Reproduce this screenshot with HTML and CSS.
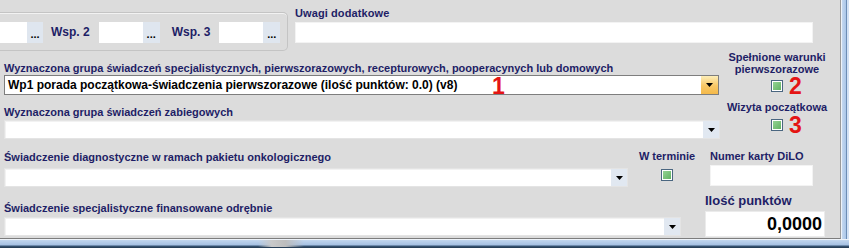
FILE: index.html
```html
<!DOCTYPE html>
<html lang="pl">
<head>
  <meta charset="UTF-8">
  <title>Świadczenia</title>
  <link rel="stylesheet" href="styles.css">
</head>
<body>
  <div class="window">
    <div class="window-body">
      <div class="panel">

        <div class="top-row">
          <div class="coords">
            <div class="pick pick-cut"><span class="pick-field"></span><span class="pick-btn">...</span></div>
            <span class="lbl coord-lbl">Wsp. 2</span>
            <div class="pick"><span class="pick-field"></span><span class="pick-btn">...</span></div>
            <span class="lbl coord-lbl coord-lbl-wide">Wsp. 3</span>
            <div class="pick"><span class="pick-field"></span><span class="pick-btn">...</span></div>
          </div>
          <div class="notes">
            <div class="lbl notes-lbl">Uwagi dodatkowe</div>
            <div class="field notes-field"></div>
          </div>
        </div>

        <div class="mid-row">
          <div class="groups">
            <div class="lbl group-lbl">Wyznaczona grupa świadczeń specjalistycznych, pierwszorazowych, recepturowych, pooperacynych lub domowych</div>
            <div class="combo combo-active">
              <span class="combo-text">Wp1 porada początkowa-świadczenia pierwszorazowe (ilość punktów: 0.0) (v8)</span>
              <span class="combo-btn combo-btn-hot">
                <svg width="7" height="4" viewBox="0 0 7 4"><path d="M0 0h7L3.5 4z" fill="#000"/></svg>
              </span>
              <span class="mark mark-one">1</span>
            </div>
            <div class="lbl group-lbl group-lbl-2">Wyznaczona grupa świadczeń zabiegowych</div>
            <div class="combo combo-wide">
              <span class="combo-text"></span>
              <span class="combo-btn">
                <svg width="7" height="4" viewBox="0 0 7 4"><path d="M0 0h7L3.5 4z" fill="#000"/></svg>
              </span>
            </div>
          </div>
          <div class="flags">
            <div class="lbl flag-lbl">Spełnione warunki<br>pierwszorazowe</div>
            <div class="check-wrap"><span class="check"></span><span class="mark mark-side">2</span></div>
            <div class="lbl flag-lbl flag-lbl-2">Wizyta początkowa</div>
            <div class="check-wrap"><span class="check"></span><span class="mark mark-side">3</span></div>
          </div>
        </div>

        <div class="bottom-row">
          <div class="lower-left">
            <div class="lower-line">
              <div class="onko">
                <div class="lbl big-lbl">Świadczenie diagnostyczne w ramach pakietu onkologicznego</div>
                <div class="combo combo-onko">
                  <span class="combo-text"></span>
                  <span class="combo-btn">
                    <svg width="7" height="4" viewBox="0 0 7 4"><path d="M0 0h7L3.5 4z" fill="#000"/></svg>
                  </span>
                </div>
              </div>
              <div class="in-time">
                <div class="lbl">W terminie</div>
                <span class="check"></span>
              </div>
            </div>
            <div class="lbl big-lbl big-lbl-2">Świadczenie specjalistyczne finansowane odrębnie</div>
            <div class="combo combo-extra">
              <span class="combo-text"></span>
              <span class="combo-btn">
                <svg width="7" height="4" viewBox="0 0 7 4"><path d="M0 0h7L3.5 4z" fill="#000"/></svg>
              </span>
            </div>
          </div>
          <div class="lower-right">
            <div class="lbl dilo-lbl">Numer karty DiLO</div>
            <div class="field dilo-field"></div>
            <div class="lbl points-lbl">Ilość punktów</div>
            <div class="field points-field">0,0000</div>
          </div>
        </div>

      </div>
      <div class="frame-right"></div>
    </div>
    <div class="frame-bottom"><span class="frame-grip"></span></div>
  </div>
</body>
</html>
```

FILE: styles.css
```css
* {
  box-sizing: border-box;
}
body {
  margin: 0;
  width: 849px;
  height: 248px;
  overflow: hidden;
  background-color: #dcdcdc;
  font-family: "Liberation Sans", Arial, sans-serif;
}
.window {
  display: flex;
  flex-direction: column;
  height: 248px;
}
.window-body {
  display: flex;
  height: 239px;
}
.panel {
  width: 841px;
  height: 239px;
  border-right: 1px solid #9a9a9a;
  border-bottom: 1px solid #7d7d7d;
}
.frame-right {
  width: 8px;
  background: linear-gradient(to right, #eef3f9 0, #eef3f9 1px, #c4d8f0 1px, #abc6e7 5px, #6d8db5 5px, #6d8db5 6px, #d3e2f5 6px);
}
.frame-bottom {
  height: 9px;
  background: linear-gradient(to bottom, #eef3f9 0, #eef3f9 1px, #c2d7ef 1px, #a6c1e3 6px, #3a5878 7px, #22384f 9px);
}
.frame-grip {
  display: block;
  width: 46px;
  height: 7px;
  margin-left: 258px;
  margin-top: 1px;
  background: linear-gradient(to right, rgba(200, 200, 200, 0), #c9c9c9 30%, #bdbdbd 60%, rgba(200, 200, 200, 0));
}

/* labels */
.lbl {
  color: #1e1e66;
  font-weight: bold;
  font-size: 11px;
  line-height: 13px;
  white-space: nowrap;
}

/* top row */
.top-row {
  display: flex;
  height: 51px;
}
.coords {
  display: flex;
  align-items: center;
  width: 288px;
  height: 39px;
  margin-top: 12px;
  padding-top: 2px;
  border: 1px solid #c4c4c4;
  border-left: none;
  border-radius: 0 5px 5px 0;
  box-shadow: inset 0 1px #f2f2f2;
}
.pick {
  display: flex;
  height: 21px;
}
.pick-field {
  width: 44px;
  background-color: #fff;
}
.pick-cut .pick-field {
  width: 27px;
}
.pick-btn {
  display: flex;
  align-items: flex-end;
  justify-content: center;
  width: 17px;
  padding-bottom: 3px;
  background-color: #dfe6ef;
  font-size: 11px;
  font-weight: bold;
  line-height: 11px;
}
.pick-cut .pick-btn {
  width: 16px;
}
.coord-lbl {
  margin: 0 9px 0 8px;
  font-size: 12px;
}
.coord-lbl-wide {
  margin-left: 12px;
}
.notes {
  width: 518px;
  margin-left: 7px;
  padding-top: 6px;
}
.notes-lbl {
  font-size: 11px;
  line-height: 15px;
  margin-bottom: 1px;
  letter-spacing: 0.1px;
}
.field {
  background-color: #fff;
  border: 1px solid #f3f3f3;
}
.notes-field {
  height: 21px;
}

/* groups */
.mid-row {
  display: flex;
  height: 87px;
}
.groups {
  width: 720px;
  padding-left: 4px;
}
.group-lbl {
  margin-top: 11px;
}
.group-lbl-2 {
  margin-top: 11px;
}
.combo {
  position: relative;
  display: flex;
  height: 19px;
  background-color: #fff;
  border: 1px solid #e4e4e4;
  box-shadow: inset 1px 1px #f2f2f2;
}
.combo-active {
  width: 715px;
  height: 20px;
  border-color: #7e7e7e;
  box-shadow: none;
}
.combo-wide {
  width: 716px;
  margin-top: 1px;
}
.combo-text {
  flex: 1;
  padding-left: 3px;
  font-size: 12px;
  font-weight: bold;
  line-height: 18px;
  color: #000;
  white-space: nowrap;
  overflow: hidden;
}
.combo-btn {
  display: flex;
  align-items: center;
  justify-content: center;
  width: 16px;
  background-color: #e1e8f1;
}
.combo-btn-hot {
  width: 17px;
  background: linear-gradient(to bottom, #fdeeb9, #f8c765 55%, #f4b94a);
}
.mark {
  color: #e41414;
  font-size: 23px;
  font-weight: bold;
  line-height: 23px;
}
.mark-one {
  position: absolute;
  left: 487px;
  top: -1px;
}

/* flags column */
.flags {
  display: flex;
  flex-direction: column;
  align-items: center;
  width: 110px;
  margin-left: 2px;
}
.flag-lbl {
  line-height: 12px;
  text-align: center;
}
.flag-lbl-2 {
  margin-top: 9px;
  line-height: 13px;
}
.check-wrap {
  position: relative;
  margin-top: 5px;
}
.check {
  display: block;
  width: 12px;
  height: 12px;
  padding: 1px;
  border: 1px solid #4a6680;
  background-color: #fff;
  background-clip: content-box;
  box-shadow: inset 0 0 0 1px #fff;
  background-image: linear-gradient(135deg, #9ad69a, #5cae5c);
}
.mark-side {
  position: absolute;
  left: 18px;
  top: -5px;
}

/* bottom */
.bottom-row {
  display: flex;
}
.lower-left {
  width: 705px;
  padding-left: 4px;
}
.lower-line {
  display: flex;
}
.onko {
  width: 624px;
}
.big-lbl {
  margin-top: 12px;
  line-height: 14px;
}
.combo-onko {
  margin-top: 4px;
}
.in-time {
  display: flex;
  flex-direction: column;
  align-items: center;
  width: 60px;
  margin-left: 9px;
  padding-top: 12px;
}
.in-time .check {
  margin-top: 6px;
}
.big-lbl-2 {
  margin-top: 14px;
}
.combo-extra {
  width: 677px;
  margin-top: 2px;
}
.lower-right {
  width: 120px;
  padding-top: 12px;
}
.dilo-lbl {
  padding-left: 5px;
}
.dilo-field {
  width: 103px;
  height: 21px;
  margin-top: 2px;
  margin-left: 5px;
}
.points-lbl {
  margin-top: 7px;
  font-size: 13px;
  line-height: 15px;
}
.points-field {
  height: 26px;
  margin-top: 3px;
  padding-right: 2px;
  border-color: #ebebeb;
  text-align: right;
  font-size: 18px;
  font-weight: bold;
  line-height: 24px;
  color: #000;
}
```
